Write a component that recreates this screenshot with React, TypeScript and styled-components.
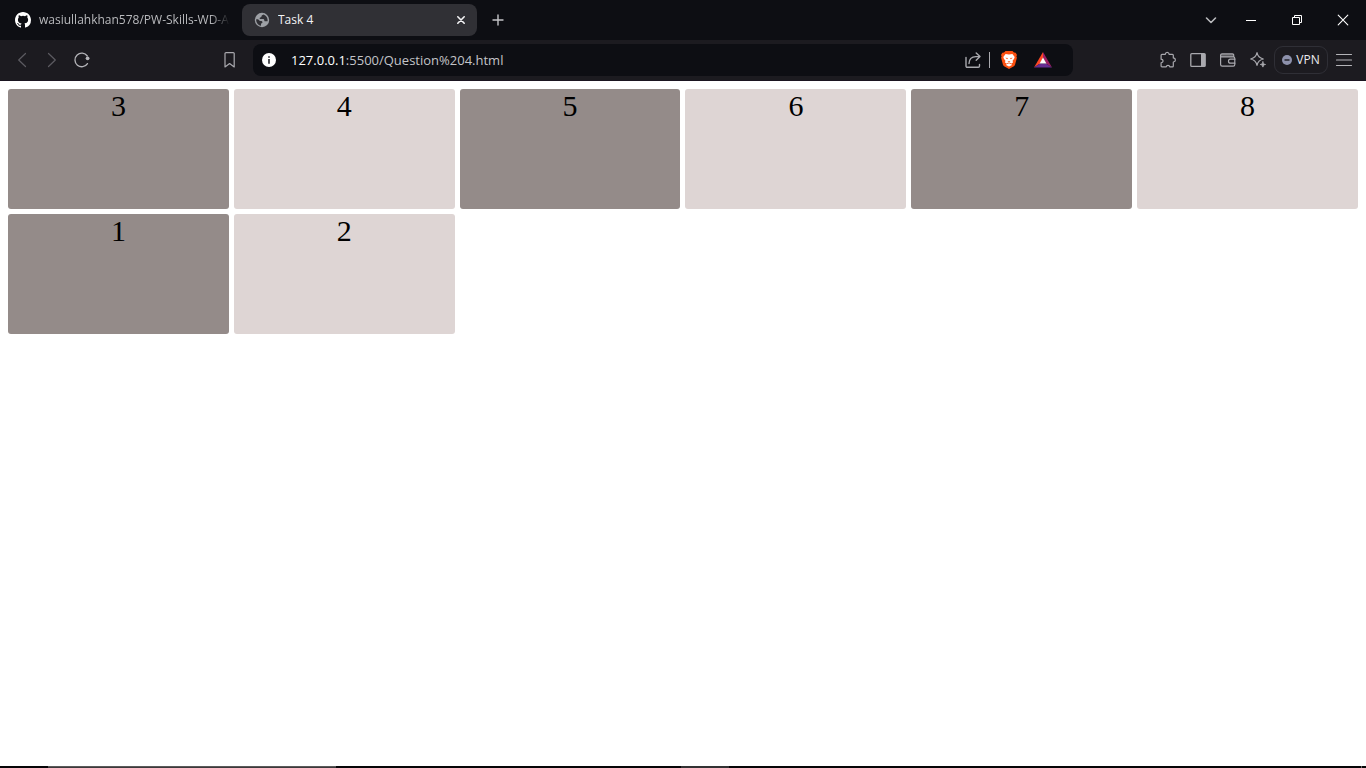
import React from "react";
import styled, { createGlobalStyle, css } from "styled-components";

const GlobalStyle = createGlobalStyle`
  *, *::before, *::after { box-sizing: border-box; }
  body { margin: 0; background: #ffffff; }
`;

const Screen = styled.div`
  display: flex;
  flex-direction: column;
  min-height: 100vh;
  background: #ffffff;
`;

const TabStrip = styled.header`
  display: flex;
  align-items: center;
  height: 40px;
  padding-left: 3px;
  background: #0d0e13;
  font: 12px/16px "Open Sans", "Noto Sans", sans-serif;
`;

const Tab = styled.div<{ $active?: boolean }>`
  display: flex;
  align-items: center;
  gap: 8px;
  width: 235px;
  height: 32px;
  margin-right: 4px;
  padding: 0 8px 0 12px;
  border-radius: 8px;
  color: #b9babd;
  ${(p) =>
    p.$active &&
    css`
      background: #303035;
      color: #f3f3f5;
    `}
`;

const TabTitle = styled.span<{ $fade?: boolean }>`
  flex: 1;
  min-width: 0;
  overflow: hidden;
  white-space: nowrap;
  ${(p) =>
    p.$fade &&
    css`
      mask-image: linear-gradient(to left, transparent, #000 20px);
    `}
`;

const IconButton = styled.button<{ $width?: number; $tone?: string }>`
  display: flex;
  flex: none;
  align-items: center;
  justify-content: center;
  width: ${(p) => p.$width ?? 30}px;
  height: 30px;
  padding: 0;
  border: 0;
  background: none;
  color: ${(p) => p.$tone ?? "#a9a9ae"};
`;

const WindowControls = styled.div`
  display: flex;
  margin-left: auto;
`;

const Toolbar = styled.nav`
  display: flex;
  align-items: center;
  height: 41px;
  padding: 0 7px;
  border-bottom: 1px solid #1a1420;
  background: #1c1b20;
`;

const ToolGroup = styled.div`
  display: flex;
  align-items: center;
`;

const HistoryGroup = styled(ToolGroup)`
  margin-right: 118px;
`;

const AddressBar = styled.div`
  display: flex;
  flex: 1;
  align-items: center;
  height: 32px;
  margin: 0 80px 0 8px;
  padding: 0 15px 0 1px;
  border-radius: 8px;
  background: #0d0e13;
`;

const Address = styled.a`
  flex: 1;
  margin-left: 7px;
  color: #c3c4c8;
  font: 13px/20px "Open Sans", "Noto Sans", sans-serif;
  text-decoration: none;
  white-space: nowrap;
`;

const Host = styled.span`
  color: #ffffff;
`;

const Divider = styled.span`
  width: 1px;
  height: 16px;
  background: #a9a9ae;
`;

const VpnButton = styled.button`
  display: flex;
  align-items: center;
  justify-content: center;
  gap: 4px;
  width: 54px;
  height: 28px;
  margin: 0 1px;
  padding: 0;
  border: 1px solid #2f2f36;
  border-radius: 9px;
  background: none;
  color: #ececf0;
  font: 12px/16px "Open Sans", "Noto Sans", sans-serif;
`;

const Page = styled.main`
  flex: 1;
  padding: 8px;
`;

const Grid = styled.div`
  display: grid;
  grid-template-columns: repeat(6, 1fr);
  grid-auto-rows: 120px;
  gap: 5px;
`;

const Cell = styled.div<{ $dark: boolean }>`
  border-radius: 3px;
  background: ${(p) => (p.$dark ? "#948b89" : "#ded5d4")};
  color: #000000;
  font: 30px/34px "Liberation Serif", serif;
  text-align: center;
`;

const TaskEdge = styled.footer`
  display: flex;
  height: 2px;
  background: #060507;
`;

const SearchEdge = styled.div`
  width: 288px;
  margin-left: 48px;
  border-top: 1px solid #5b5a5a;
  background: #3c3a3b;
`;

const ActiveAppEdge = styled.div`
  width: 48px;
  margin-left: 345px;
  background: #333233;
`;

const DesktopEdge = styled.div`
  width: 1px;
  margin: 0 4px 0 auto;
  background: #6b6b6b;
`;

type GlyphProps = { size?: number; stroke?: number; children: React.ReactNode };

const Glyph = ({ size = 18, stroke = 1.2, children }: GlyphProps) => (
  <svg
    width={size}
    height={size}
    viewBox={`0 0 ${size} ${size}`}
    fill="none"
    stroke="currentColor"
    strokeWidth={stroke}
    strokeLinecap="round"
    strokeLinejoin="round"
    aria-hidden="true"
  >
    {children}
  </svg>
);

const GithubMark = () => (
  <svg width="16" height="16" viewBox="0 0 16 16" fill="#ffffff" aria-hidden="true">
    <path d="M8 0C3.58 0 0 3.58 0 8c0 3.54 2.29 6.53 5.47 7.59.4.07.55-.17.55-.38 0-.19-.01-.82-.01-1.49-2.01.37-2.53-.49-2.69-.94-.09-.23-.48-.94-.82-1.13-.28-.15-.68-.52-.01-.53.63-.01 1.08.58 1.23.82.72 1.21 1.87.87 2.33.66.07-.52.28-.87.51-1.07-1.78-.2-3.64-.89-3.64-3.95 0-.87.31-1.59.82-2.15-.08-.2-.36-1.02.08-2.12 0 0 .67-.21 2.2.82a7.6 7.6 0 0 1 4 0c1.53-1.04 2.2-.82 2.2-.82.44 1.1.16 1.92.08 2.12.51.56.82 1.27.82 2.15 0 3.07-1.87 3.75-3.65 3.95.29.25.54.73.54 1.48 0 1.07-.01 1.93-.01 2.2 0 .21.15.46.55.38A8.01 8.01 0 0 0 16 8c0-4.42-3.58-8-8-8Z" />
  </svg>
);

const Globe = () => (
  <svg width="16" height="16" viewBox="0 0 16 16" aria-hidden="true">
    <circle cx="8" cy="8" r="7.2" fill="#9da0a5" />
    <path
      d="M9.400 2.400c-1 .5-1.900 1-1.900 1.900 0 .7-.4 1-1.200 1.100-.8.1-.8 1-.3 1.700H9c.9 0 1.300.6 1.300 1.300 0 .6.400.9 1.100.9h2.200c.4-3.100-1.400-6-4.200-6.900Z"
      fill="#303035"
    />
    <path
      d="M2.200 7.200c-.3 3.200 1.700 6 4.800 6.500v-1.500c0-.7.5-1 1-1.200.6-.3.6-1.100.2-1.600-.4-.4-1-.5-1.800-.5-1 0-1.300-.7-2-1.300-.6-.5-1.400-.4-2.200-.4Z"
      fill="#303035"
    />
  </svg>
);

const InfoIcon = () => (
  <svg width="14" height="14" viewBox="0 0 14 14" aria-hidden="true">
    <circle cx="7" cy="7" r="7" fill="#ffffff" />
    <path d="M6.100 3.200h1.800v1.500H6.100zM6.100 6h1.800v4.800H6.100z" fill="#3a3b40" />
  </svg>
);

const BraveLion = () => (
  <svg width="18" height="18" viewBox="0 0 18 18" aria-hidden="true">
    <path
      d="M5.500 0h7l1.500 1.600 1.700.1 1.300 2.200-.6 1.400.5 1.400-1.800 6.700c-.3 1-.8 1.600-1.600 2.200L9 18l-4.500-2.400c-.8-.6-1.300-1.200-1.600-2.200L1.100 6.700l.5-1.400L1 3.900l1.300-2.200 1.700-.1Z"
      fill="#fb5011"
    />
    <path
      d="M5.600 3 9 3.500l3.400-.5 2.300 2.900-.6 1.800-1.500 2 .4 1.800-2 1.200 1 1.200L9 15.400l-3-1.500 1-1.200-2-1.200.4-1.800-1.500-2-.6-1.800Z"
      fill="#ffffff"
    />
    <path
      d="m5.300 6.700 2.600.4-.6 1.100ZM12.700 6.700l-2.600.4.600 1.100ZM7.500 9.900h3L9 11ZM6.800 12.300 9 11.500l2.200.8-.4.600L9 12.200l-1.800.7Z"
      fill="#fb5011"
    />
  </svg>
);

const BatTriangle = () => (
  <svg width="18" height="16" viewBox="0 0 18 16" aria-hidden="true">
    <path d="M9 0 0 15.500 6 11.500 9 6Z" fill="#ff4724" />
    <path d="m9 0 9 15.500-6-4L9 6Z" fill="#9e1f63" />
    <path d="M0 15.500h18l-6-4H6Z" fill="#662d91" />
    <path d="m9 5.500 3.400 6.100H5.600Z" fill="#ffffff" />
  </svg>
);

const Vpn = () => (
  <svg width="10" height="10" viewBox="0 0 10 10" aria-hidden="true">
    <circle cx="5" cy="5" r="5" fill="#8d91ab" />
    <path d="M2.500 4.300h5v1.400h-5z" fill="#1c1b20" />
  </svg>
);

const cells = [3, 4, 5, 6, 7, 8, 1, 2];

export default function App() {
  return (
    <Screen>
      <GlobalStyle />
      <TabStrip>
        <Tab>
          <GithubMark />
          <TabTitle $fade>wasiullahkhan578/PW-Skills-WD-As</TabTitle>
        </Tab>
        <Tab $active>
          <Globe />
          <TabTitle>Task 4</TabTitle>
          <IconButton $width={16} $tone="#f3f3f5" aria-label="Close tab">
            <Glyph size={16} stroke={1.6}>
              <path d="m4.800 4.800 6.400 6.400M11.200 4.800l-6.400 6.400" />
            </Glyph>
          </IconButton>
        </Tab>
        <IconButton $width={34} $tone="#c4c4c8" aria-label="New tab">
          <Glyph stroke={1.4}>
            <path d="M9 4v10M4 9h10" />
          </Glyph>
        </IconButton>
        <WindowControls>
          <IconButton $width={34} $tone="#b9babd" aria-label="Search tabs">
            <Glyph stroke={1.6}>
              <path d="m4.500 7 4.500 4.500L13.500 7" />
            </Glyph>
          </IconButton>
          <IconButton $width={46} $tone="#ffffff" aria-label="Minimize">
            <Glyph stroke={1}>
              <path d="M4 9.500h10" strokeLinecap="butt" />
            </Glyph>
          </IconButton>
          <IconButton $width={46} $tone="#ffffff" aria-label="Restore">
            <Glyph stroke={1}>
              <path
                d="M4.500 6.500h7v7h-7zM6.500 6.500v-2h7v7h-2"
                strokeLinecap="butt"
                strokeLinejoin="miter"
              />
            </Glyph>
          </IconButton>
          <IconButton $width={46} $tone="#ffffff" aria-label="Close">
            <Glyph stroke={1.1}>
              <path d="m4.200 4.200 9.600 9.600M13.800 4.200l-9.600 9.600" />
            </Glyph>
          </IconButton>
        </WindowControls>
      </TabStrip>

      <Toolbar>
        <HistoryGroup>
          <IconButton $tone="#5c5b61" aria-label="Back">
            <Glyph>
              <path d="M12.500 2.500 5.700 9l6.800 6.500" />
            </Glyph>
          </IconButton>
          <IconButton $tone="#5c5b61" aria-label="Forward">
            <Glyph>
              <path d="M5.500 2.500 12.300 9l-6.800 6.500" />
            </Glyph>
          </IconButton>
          <IconButton $tone="#b4b4b8" aria-label="Reload">
            <Glyph stroke={1.3}>
              <path d="M14.500 12.600A6.800 6.800 0 1 1 14.300 5" />
              <circle cx="14.600" cy="7.300" r="1.900" fill="currentColor" stroke="none" />
            </Glyph>
          </IconButton>
        </HistoryGroup>
        <IconButton aria-label="Bookmark this page">
          <Glyph>
            <path d="M5 1.600h7.200a1 1 0 0 1 1 1v13.300l-4.600-3.300L4 15.900V2.600a1 1 0 0 1 1-1Z" />
          </Glyph>
        </IconButton>
        <AddressBar>
          <IconButton aria-label="Site information">
            <InfoIcon />
          </IconButton>
          <Address href="http://127.0.0.1:5500/Question%204.html">
            <Host>127.0.0.1</Host>:5500/Question%204.html
          </Address>
          <IconButton $width={33} aria-label="Share">
            <Glyph stroke={1.4}>
              <path d="M2 6.500v8.600a1.200 1.200 0 0 0 1.200 1.200h11.100a1.200 1.200 0 0 0 1.200-1.200v-1.600" />
              <path d="M5 12.500c.2-4.200 2.800-6.900 6.900-6.900h3.800M12.200 2l3.800 3.600-3.800 3.700" />
            </Glyph>
          </IconButton>
          <Divider />
          <IconButton $width={38} aria-label="Brave Shields">
            <BraveLion />
          </IconButton>
          <IconButton aria-label="Brave Rewards">
            <BatTriangle />
          </IconButton>
        </AddressBar>
        <ToolGroup>
          <IconButton aria-label="Extensions">
            <Glyph>
              <path d="M3 3.400h3.200c.2-1.300.9-2 2-2s1.800.7 2 2h3.200a.9.900 0 0 1 .9.900v2.600c1.400.2 2.100.9 2.100 2s-.7 1.900-2.100 2.100v4a.9.900 0 0 1-.9.900h-2.600c-.2-1-.9-1.500-1.800-1.500s-1.600.5-1.800 1.500H3a.9.900 0 0 1-.9-.9v-3.200c1.300-.2 2-.9 2-1.800s-.7-1.600-2-1.800V4.300a.9.900 0 0 1 .9-.9Z" />
            </Glyph>
          </IconButton>
          <IconButton aria-label="Sidebar">
            <Glyph stroke={1.3}>
              <rect x="1.800" y="2.600" width="14.400" height="12.800" rx="1" />
              <path d="M12 3h4v12h-4z" fill="currentColor" stroke="none" />
            </Glyph>
          </IconButton>
          <IconButton aria-label="Wallet">
            <Glyph>
              <path d="M2 3h12.500v3H2z" fill="currentColor" fillOpacity="0.45" stroke="none" />
              <path d="M14.700 5.800V4a1.200 1.200 0 0 0-1.200-1.200H3A1.400 1.400 0 0 0 1.600 4.200v9.400A1.600 1.600 0 0 0 3.200 15.200h11a1.600 1.600 0 0 0 1.600-1.600V7.400a1.600 1.600 0 0 0-1.600-1.600H1.800" />
              <path d="M15.800 8.200h-4.300a2 2 0 0 0 0 4h4.300" />
            </Glyph>
          </IconButton>
          <IconButton aria-label="Leo AI">
            <Glyph>
              <path d="M8 1.700c.7 3.700 2 5.300 6.300 6.300-3.600.8-5.500 2.400-6.300 6.300C7.200 10.400 5.300 8.800 1.700 8 6 7 7.300 5.400 8 1.700Z" />
              <path
                d="M13.900 10.900c.3 1.700.9 2.300 2.600 2.600-1.700.3-2.300.9-2.600 2.600-.3-1.700-.9-2.300-2.600-2.600 1.700-.3 2.300-.9 2.600-2.600Z"
                fill="currentColor"
                strokeWidth="0.9"
              />
            </Glyph>
          </IconButton>
          <VpnButton>
            <Vpn />
            VPN
          </VpnButton>
          <IconButton $tone="#b4b4b8" aria-label="Menu">
            <Glyph>
              <path d="M1.500 3.500h15M1.500 9h15M1.500 14.500h15" />
            </Glyph>
          </IconButton>
        </ToolGroup>
      </Toolbar>

      <Page>
        <Grid>
          {cells.map((n) => (
            <Cell key={n} $dark={n % 2 === 1}>
              {n}
            </Cell>
          ))}
        </Grid>
      </Page>

      <TaskEdge>
        <SearchEdge />
        <ActiveAppEdge />
        <DesktopEdge />
      </TaskEdge>
    </Screen>
  );
}
